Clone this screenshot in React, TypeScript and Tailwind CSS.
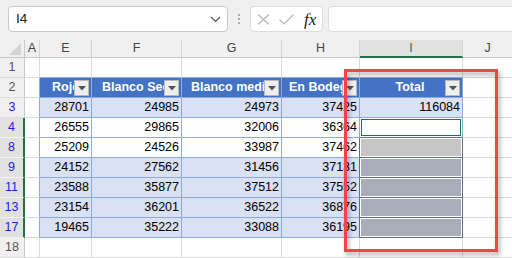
import React from "react";

const GRID = "border-[#dadada]";

function FilterBtn() {
  return (
    <div className="absolute right-[2px] top-[2px] w-[15px] h-[16px] bg-[#efefef] border border-[#b8b8b8] flex items-center justify-center">
      <svg width="8" height="5" viewBox="0 0 8 5">
        <path d="M0 0 L8 0 L4 4.5 Z" fill="#555" />
      </svg>
    </div>
  );
}

type Row = { n: number; vals: (number | null)[]; total?: number | null };

const dataRows: Row[] = [
  { n: 3, vals: [28701, 24985, 24973, 37425] },
  { n: 4, vals: [26555, 29865, 32006, 36364] },
  { n: 8, vals: [25209, 24526, 33987, 37462] },
  { n: 9, vals: [24152, 27562, 31456, 37131] },
  { n: 11, vals: [23588, 35877, 37512, 37552] },
  { n: 13, vals: [23154, 36201, 36522, 36876] },
  { n: 17, vals: [19465, 35222, 33088, 36195] },
];

const headers = [
  { t: "Rojo", pl: "pl-[12px]" },
  { t: "Blanco Seco", pl: "pl-[10px]" },
  { t: "Blanco medio", pl: "pl-[9px]" },
  { t: "En Bodega", pl: "pl-[7px]" },
];

function RowHead({ n, hl, blue }: { n: number; hl?: boolean; blue?: boolean }) {
  return (
    <div
      className={
        "h-[20px] flex items-center justify-center border-b " +
        (hl
          ? "bg-[#e1e1e1] border-b-[#f4f4f4] border-r-2 border-r-[#217346]"
          : "bg-[#f0f0f0] border-b-[#dcdcdc] border-r border-r-[#c8c8c8]") +
        (blue ? " text-[#1c1cf0]" : " text-[#555]")
      }
    >
      {n}
    </div>
  );
}

export default function App() {
  return (
    <div className="w-[512px] h-[258px] bg-[#f0f0f0] relative overflow-hidden font-['Liberation_Sans',Arial,sans-serif] text-[12.5px] leading-none">
      {/* formula bar */}
      <div className="h-[40px] flex items-start pt-[6px] pl-[8px]">
        <div className="w-[220px] h-[26px] bg-white border border-[#c9c9c9] rounded-[4px] flex items-center justify-between pl-[7px] pr-[6px] shrink-0">
          <span className="text-[13.5px] text-[#222]">I4</span>
          <svg width="11" height="7" viewBox="0 0 11 7">
            <path d="M1 1 L5.5 5.5 L10 1" stroke="#555" strokeWidth="1.2" fill="none" />
          </svg>
        </div>
        <div className="w-[22px] h-[26px] flex flex-col items-center justify-center gap-[2px] shrink-0">
          <div className="w-[2px] h-[2px] bg-[#999] rounded-full" />
          <div className="w-[2px] h-[2px] bg-[#999] rounded-full" />
          <div className="w-[2px] h-[2px] bg-[#999] rounded-full" />
        </div>
        <div className="w-[73px] h-[26px] bg-white border border-[#dcdcdc] rounded-[4px] flex items-center pl-[5px] shrink-0">
          <svg width="13" height="11" viewBox="0 0 13 11" className="ml-[1px]">
            <path d="M1 0.5 L12 10.5 M12 0.5 L1 10.5" stroke="#b4b4b4" strokeWidth="1.1" />
          </svg>
          <svg width="15" height="11" viewBox="0 0 15 11" className="ml-[9px]">
            <path d="M0.5 5.5 L5 10 L14.5 0.5" stroke="#b4b4b4" strokeWidth="1.1" fill="none" />
          </svg>
          <span className="ml-[10px] font-['Liberation_Serif',serif] italic text-[17px] text-[#222]">fx</span>
        </div>
        <div className="ml-[5px] w-[200px] h-[26px] bg-white border border-[#dcdcdc] rounded-[4px] shrink-0" />
      </div>

      {/* grid */}
      <div className="grid grid-cols-[25px_15px_52px_90px_100px_78px_103px_49px] bg-white">
        {/* column header row */}
        <div className="h-[18px] bg-[#f0f0f0] border-r border-b border-[#c8c8c8] relative">
          <svg width="12" height="12" viewBox="0 0 12 12" className="absolute right-[3px] bottom-[2px]">
            <path d="M12 0 L12 12 L0 12 Z" fill="#d4d4d4" />
          </svg>
        </div>
        {["A", "E", "F", "G", "H"].map((c) => (
          <div key={c} className="h-[18px] bg-[#f0f0f0] border-r border-r-[#d4d4d4] border-b border-b-[#c8c8c8] flex items-center justify-center text-[#444]">
            {c}
          </div>
        ))}
        <div className="h-[18px] bg-[#e1e1e1] border-r border-r-[#d4d4d4] border-b-2 border-b-[#217346] flex items-center justify-center text-[#1f6f5a]">
          I
        </div>
        <div className="h-[18px] bg-[#f0f0f0] border-b border-b-[#c8c8c8] flex items-center justify-center text-[#444]">
          J
        </div>

        {/* row 1 */}
        <RowHead n={1} />
        <div className={"h-[20px] border-r border-b " + GRID} />
        {[0, 1, 2, 3, 4].map((i) => (
          <div key={i} className="h-[20px] border-r border-r-[#dadada] border-b border-b-[#8ea9db]" />
        ))}
        <div className={"h-[20px] border-b " + GRID} />

        {/* row 2: table header */}
        <RowHead n={2} />
        <div className="h-[20px] border-r border-r-[#8ea9db] border-b border-b-[#dadada]" />
        {headers.map((h) => (
          <div key={h.t} className={"h-[20px] bg-[#4472c4] border-r border-b border-[#8ea9db] relative overflow-hidden flex items-center whitespace-nowrap text-white font-bold " + h.pl}>
            {h.t}
            <FilterBtn />
          </div>
        ))}
        <div className="h-[20px] bg-[#4472c4] border-r border-b border-[#8ea9db] relative flex items-center justify-center text-white font-bold pr-[2px]">
          Total
          <FilterBtn />
        </div>
        <div className={"h-[20px] border-b " + GRID} />

        {/* data rows */}
        {dataRows.map((r) => {
          const band = r.n % 2 === 1;
          const hl = r.n !== 3;
          const bg = band ? "bg-[#d9e1f2]" : "bg-white";
          return (
            <React.Fragment key={r.n}>
              <RowHead n={r.n} hl={hl} blue />
              <div className={"h-[20px] border-r border-r-[#8ea9db] border-b " + GRID} />
              {r.vals.map((v, i) => (
                <div
                  key={i}
                  className={
                    "h-[20px] border-b border-b-[#8ea9db] border-r flex items-center justify-end pr-[2px] text-black " +
                    bg +
                    (i === 3 && r.n >= 8 ? " border-r-[#5d6f90]" : " border-r-[#8ea9db]")
                  }
                >
                  {v}
                </div>
              ))}
              {r.n === 3 ? (
                <div className="h-[20px] bg-[#d9e1f2] border-r border-b border-[#8ea9db] flex items-center justify-end pr-[2px] text-black">
                  116084
                </div>
              ) : r.n === 4 ? (
                <div className="h-[20px] bg-white border-r border-r-[#8ea9db] border-b border-b-[#5d6f90] p-[1px]">
                  <div className="w-full h-full border border-[#217346]" />
                </div>
              ) : (
                <div className="h-[20px] bg-white border-r border-b border-[#5d6f90] p-[1px]">
                  <div className={"w-full h-full " + (r.n === 8 ? "bg-[#c6c6c6]" : "bg-[#a7adb9]")} />
                </div>
              )}
              <div className={"h-[20px] border-b " + GRID} />
            </React.Fragment>
          );
        })}

        {/* row 18 */}
        <RowHead n={18} />
        {[0, 1, 2, 3, 4, 5].map((i) => (
          <div key={i} className={"h-[20px] border-r border-b " + GRID} />
        ))}
        <div className={"h-[20px] border-b " + GRID} />
      </div>

      {/* red highlight rectangle */}
      <div className="absolute left-[344px] top-[69px] w-[154px] h-[183px] border-[3px] border-[#f44448] drop-shadow-[2px_3px_2px_rgba(0,0,0,0.35)]" />
    </div>
  );
}
